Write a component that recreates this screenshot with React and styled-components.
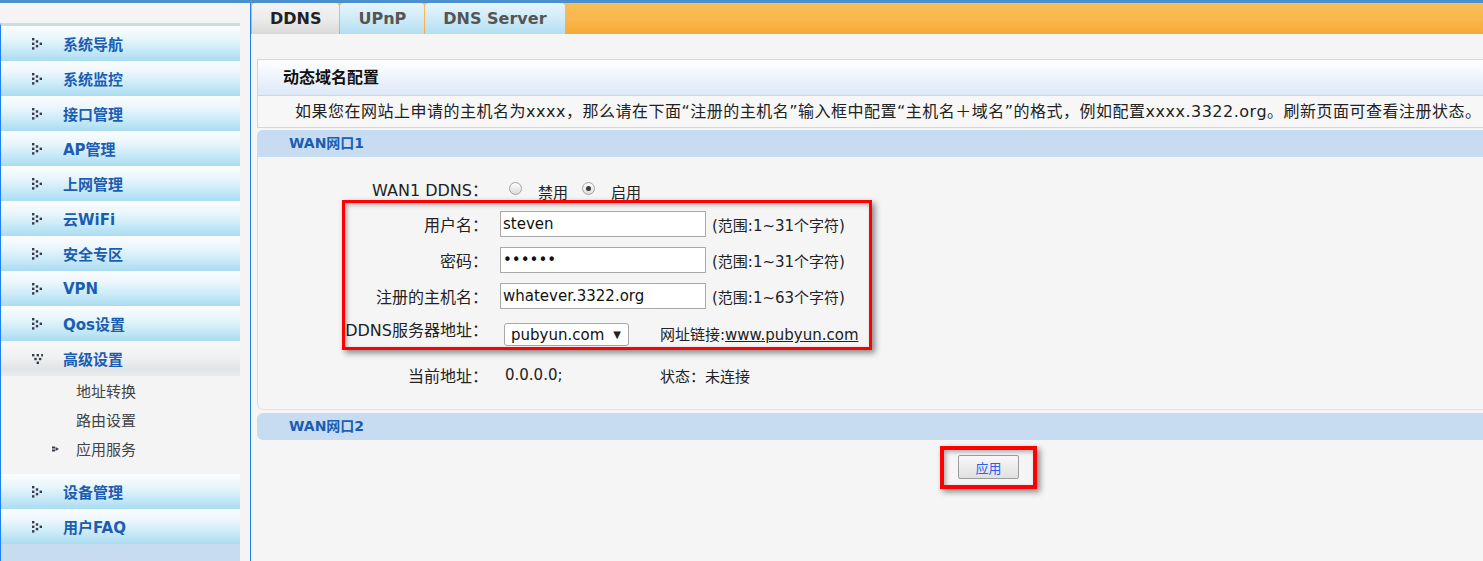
import React from "react";
import styled, { createGlobalStyle } from "styled-components";

const SANS = `"DejaVu Sans", "Noto Sans CJK SC", sans-serif`;
const LINE = "#1f80f0";

const Global = createGlobalStyle`
  html, body { margin: 0; padding: 0; background: #f4f4f4; overflow: hidden; }
  body { font-family: ${SANS}; color: #222; }
  * { box-sizing: border-box; }
`;

const Page = styled.div`
  width: 1483px;
  height: 561px;
  display: flex;
  flex-direction: column;
  overflow: hidden;
`;

const TopStripe = styled.div`
  flex: none;
  height: 3px;
  background: #4a8fd0;
`;

const Frame = styled.div`
  flex: 1;
  min-height: 0;
  display: flex;
`;

/* ---------- sidebar ---------- */

const Sidebar = styled.aside`
  flex: none;
  width: 251px;
  padding-top: 20px;
  border-right: 1px solid ${LINE};
  background: #f4f4f4;
  display: flex;
  flex-direction: column;
`;

const Menu = styled.nav`
  flex: 1;
  width: 240px;
  border-left: 1px solid ${LINE};
  border-top: 3px solid #c7dcf0;
  display: flex;
  flex-direction: column;
`;

const MenuItem = styled.div`
  flex: none;
  height: 35px;
  display: flex;
  align-items: center;
  gap: 20px;
  padding-left: 31px;
  font-size: 15px;
  font-weight: bold;
  color: #1b5db3;
  background: ${(p) =>
    p.$open
      ? "linear-gradient(#f7f8f9 0%, #f0f1f2 45%, #e1e4e7 80%, #e9ebed 100%)"
      : "linear-gradient(#fbfdff 0%, #e9f6fc 35%, #c7e9f7 70%, #aadcf2 100%)"};
`;

const DotIcon = styled.svg`
  flex: none;
  display: block;
`;

const MenuIcon = ({ down }) => {
  const pts = [
    [0, 0],
    [0, 4.6],
    [0, 9.2],
    [3.8, 2.3],
    [3.8, 6.9],
    [7.6, 4.6],
  ];
  return (
    <DotIcon width="11" height="12" viewBox="0 0 11 12">
      {pts.map(([a, b], i) => {
        const x = down ? b : a;
        const y = down ? a + 1 : b;
        return <rect key={i} x={x} y={y} width="2.4" height="2.4" fill="#363a4c" />;
      })}
    </DotIcon>
  );
};

const SubList = styled.div`
  flex: none;
  padding-bottom: 11px;
`;

const SubItem = styled.div`
  height: 29px;
  display: grid;
  grid-template-columns: 24px auto;
  align-items: center;
  padding-left: 51px;
  font-size: 15px;
  color: #444;
`;

const SubArrow = () => (
  <DotIcon width="7" height="6" viewBox="0 0 7 6">
    <rect x="0" y="0.5" width="3" height="2" fill="#3a3d4a" />
    <rect x="0" y="3.5" width="3" height="2" fill="#3a3d4a" />
    <polygon points="3.5,1 7,3 3.5,5" fill="#3a3d4a" />
  </DotIcon>
);

const MenuFooter = styled.div`
  flex: 1;
  background: #c8dcf0;
`;

/* ---------- main ---------- */

const Main = styled.main`
  flex: 1;
  min-width: 0;
  overflow: hidden;
  display: flex;
  flex-direction: column;
  background: #f5f5f5;
`;

const TabBar = styled.div`
  flex: none;
  height: 31px;
  display: flex;
  align-items: stretch;
  gap: 1px;
  padding-left: 1px;
  background: linear-gradient(#f9be58 0%, #f8b64b 55%, #f6aa33 100%);
`;

const Tab = styled.div`
  display: flex;
  align-items: center;
  padding: 0 18px;
  border-radius: 4px 4px 0 0;
  font: bold 16px ${SANS};
  color: ${(p) => (p.$active ? "#222" : "#555")};
  background: ${(p) =>
    p.$active
      ? "linear-gradient(#f3f3f3 0%, #ececec 50%, #d9d9d9 100%)"
      : "linear-gradient(#e6f5fc 0%, #cfebf8 50%, #b2def2 100%)"};
`;

const Content = styled.div`
  flex: none;
  width: 1469px;
  padding: 25px 0 0 6px;
`;

const Panel = styled.section`
  border: 1px solid #c5daf0;
`;

const PanelHeader = styled.div`
  height: 36px;
  line-height: 35px;
  padding-left: 25px;
  border-bottom: 1px solid #c5daf0;
  font-size: 16px;
  font-weight: bold;
  color: #111;
  background: linear-gradient(#fdfeff 0%, #f0f5fd 45%, #dde8f7 100%);
`;

const PanelNote = styled.div`
  height: 31px;
  line-height: 31px;
  padding-left: 37px;
  font-size: 16px;
  letter-spacing: 0.5px;
  color: #222;
  white-space: nowrap;
  background: #f7f7f7;
`;

const SectionHeader = styled.div`
  height: 27px;
  line-height: 27px;
  margin-top: ${(p) => p.$mt || 0}px;
  padding-left: 32px;
  font-size: 14px;
  font-weight: bold;
  color: #1b5db3;
  background: #c7dcf0;
  border-radius: ${(p) => (p.$closed ? "6px 0 0 6px" : "6px 0 0 0")};
`;

const SectionBody = styled.div`
  position: relative;
  height: 253px;
  padding-top: 21px;
  margin-bottom: 3px;
  border-left: 1px solid #d9dee5;
  border-bottom: 1px solid #dfe3e8;
  border-bottom-left-radius: 6px;
`;

const FormRow = styled.div`
  display: flex;
  align-items: ${(p) => (p.$top ? "flex-start" : "center")};
  height: ${(p) => p.$h}px;
  margin-top: ${(p) => p.$mt || 0}px;
`;

const Label = styled.div`
  flex: none;
  width: 230px;
  margin-right: 12px;
  text-align: right;
  white-space: nowrap;
  font-size: 16px;
  line-height: ${(p) => (p.$lh ? `${p.$lh}px` : "normal")};
  color: #222;
`;

const TextInput = styled.input`
  width: 206px;
  height: 26px;
  padding: 0 2px;
  border: 1px solid #a9a9a9;
  border-radius: 0;
  background: #fff;
  font: 15px ${SANS};
  color: #111;
  outline: none;
`;

const Hint = styled.span`
  margin-left: 6px;
  font-size: 15px;
  color: #222;
  white-space: nowrap;
`;

const RadioGroup = styled.div`
  display: flex;
  align-items: center;
  padding-left: 9px;
`;

const Radio = styled.span`
  position: relative;
  width: 13px;
  height: 13px;
  border-radius: 50%;
  border: 1px solid #a3a3a3;
  background: linear-gradient(#fdfdfd, #dcdcdc);
  margin-top: -2px;

  &::after {
    content: "";
    display: ${(p) => (p.$checked ? "block" : "none")};
    position: absolute;
    left: 3px;
    top: 3px;
    width: 5px;
    height: 5px;
    border-radius: 50%;
    background: #3a3a3a;
  }
`;

const RadioText = styled.span`
  margin: 4px ${(p) => (p.$last ? 0 : 14)}px 0 16px;
  font-size: 15px;
  color: #222;
`;

const Select = styled.div`
  width: 125px;
  height: 23px;
  margin: 1px 0 0 4px;
  padding: 0 7px 0 6px;
  display: flex;
  align-items: center;
  justify-content: space-between;
  border: 1px solid #a8a8a8;
  border-radius: 3px;
  background: #fff;
  font-size: 15px;
  color: #111;
`;

const Caret = styled.span`
  font-size: 10px;
  color: #222;
`;

const LinkLabel = styled.span`
  margin: 1px 0 0 31px;
  font-size: 15px;
  color: #222;
  white-space: nowrap;
`;

const Link = styled.span`
  text-decoration: underline;
  color: #222;
`;

const Value = styled.span`
  width: ${(p) => p.$w}px;
  padding-left: ${(p) => p.$pl || 0}px;
  font-size: 15px;
  color: #222;
  white-space: nowrap;
`;

const Highlight = styled.div`
  position: absolute;
  left: 84px;
  top: 43px;
  width: 530px;
  height: 150px;
  border: 3px solid #f00;
  box-shadow: 3px 3px 6px rgba(0, 0, 0, 0.45), inset 2px 2px 4px rgba(0, 0, 0, 0.3);
  pointer-events: none;
`;

const ButtonRow = styled.div`
  display: flex;
  justify-content: center;
  padding-top: 15px;
`;

const ApplyWrap = styled.div`
  position: relative;

  &::after {
    content: "";
    position: absolute;
    left: -18px;
    right: -18px;
    top: -9px;
    bottom: -10px;
    border: 4px solid #f00;
    box-shadow: 3px 3px 6px rgba(0, 0, 0, 0.45), inset 2px 2px 4px rgba(0, 0, 0, 0.3);
    pointer-events: none;
  }
`;

const ApplyButton = styled.button`
  display: block;
  width: 61px;
  height: 24px;
  padding: 0;
  border: 1px solid #9c9c9c;
  border-radius: 2px;
  background: linear-gradient(#f8f8f8, #e0e0e0);
  font: 13px ${SANS};
  color: #2f5cf0;
`;

const topMenu = ["系统导航", "系统监控", "接口管理", "AP管理", "上网管理", "云WiFi", "安全专区", "VPN", "Qos设置"];
const subMenu = [
  { label: "地址转换" },
  { label: "路由设置" },
  { label: "应用服务", arrow: true },
];
const bottomMenu = ["设备管理", "用户FAQ"];

export default function App() {
  return (
    <>
      <Global />
      <Page>
        <TopStripe />
        <Frame>
          <Sidebar>
            <Menu>
              {topMenu.map((m) => (
                <MenuItem key={m}>
                  <MenuIcon />
                  <span>{m}</span>
                </MenuItem>
              ))}
              <MenuItem $open>
                <MenuIcon down />
                <span>高级设置</span>
              </MenuItem>
              <SubList>
                {subMenu.map((s) => (
                  <SubItem key={s.label}>
                    <span>{s.arrow ? <SubArrow /> : null}</span>
                    <span>{s.label}</span>
                  </SubItem>
                ))}
              </SubList>
              {bottomMenu.map((m) => (
                <MenuItem key={m}>
                  <MenuIcon />
                  <span>{m}</span>
                </MenuItem>
              ))}
              <MenuFooter />
            </Menu>
          </Sidebar>

          <Main>
            <TabBar>
              <Tab $active>DDNS</Tab>
              <Tab>UPnP</Tab>
              <Tab>DNS Server</Tab>
            </TabBar>
            <Content>
              <Panel>
                <PanelHeader>动态域名配置</PanelHeader>
                <PanelNote>
                  如果您在网站上申请的主机名为xxxx，那么请在下面“注册的主机名”输入框中配置“主机名＋域名”的格式，例如配置xxxx.3322.org。刷新页面可查看注册状态。
                </PanelNote>
              </Panel>

              <SectionHeader $mt={2}>WAN网口1</SectionHeader>
              <SectionBody>
                <FormRow $h={22}>
                  <Label>WAN1 DDNS：</Label>
                  <RadioGroup>
                    <Radio />
                    <RadioText>禁用</RadioText>
                    <Radio $checked />
                    <RadioText $last>启用</RadioText>
                  </RadioGroup>
                </FormRow>
                <FormRow $h={26} $mt={11}>
                  <Label>用户名：</Label>
                  <TextInput type="text" defaultValue="steven" readOnly />
                  <Hint>(范围:1~31个字符)</Hint>
                </FormRow>
                <FormRow $h={26} $mt={10}>
                  <Label>密码：</Label>
                  <TextInput type="password" defaultValue="123456" readOnly />
                  <Hint>(范围:1~31个字符)</Hint>
                </FormRow>
                <FormRow $h={26} $mt={10}>
                  <Label>注册的主机名：</Label>
                  <TextInput type="text" defaultValue="whatever.3322.org" readOnly />
                  <Hint>(范围:1~63个字符)</Hint>
                </FormRow>
                <FormRow $h={25} $mt={13} $top>
                  <Label $lh={18}>DDNS服务器地址：</Label>
                  <Select>
                    <span>pubyun.com</span>
                    <Caret>▼</Caret>
                  </Select>
                  <LinkLabel>
                    网址链接:<Link>www.pubyun.com</Link>
                  </LinkLabel>
                </FormRow>
                <FormRow $h={20} $mt={18}>
                  <Label>当前地址：</Label>
                  <Value $w={160} $pl={5}>0.0.0.0;</Value>
                  <Value $w={200}>状态：未连接</Value>
                </FormRow>
                <Highlight />
              </SectionBody>

              <SectionHeader $closed>WAN网口2</SectionHeader>
              <ButtonRow>
                <ApplyWrap>
                  <ApplyButton type="button">应用</ApplyButton>
                </ApplyWrap>
              </ButtonRow>
            </Content>
          </Main>
        </Frame>
      </Page>
    </>
  );
}
